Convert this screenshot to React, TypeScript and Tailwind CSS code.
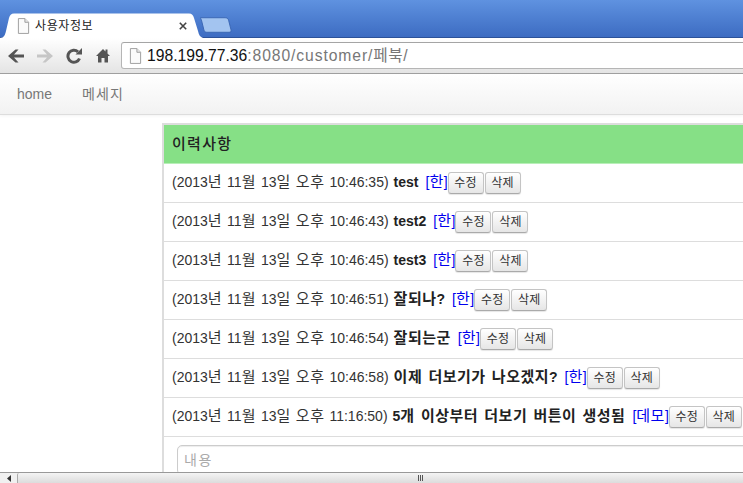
import React from "react";

const FONT = "font-['Liberation_Sans','Noto_Sans_CJK_KR',sans-serif]";

type Item = { time: string; title: string; tag: string };

const items: Item[] = [
  { time: "10:46:35", title: "test", tag: "한" },
  { time: "10:46:43", title: "test2", tag: "한" },
  { time: "10:46:45", title: "test3", tag: "한" },
  { time: "10:46:51", title: "잘되나?", tag: "한" },
  { time: "10:46:54", title: "잘되는군", tag: "한" },
  { time: "10:46:58", title: "이제 더보기가 나오겠지?", tag: "한" },
  { time: "11:16:50", title: "5개 이상부터 더보기 버튼이 생성됨", tag: "데모" },
];

// hangul runs are a bit narrower here than in the original font
const Ko = ({ text }: { text: string }) => (
  <>
    {text.split(/([가-힣]+)/).map((part, i) =>
      /[가-힣]/.test(part) ? (
        <span key={i} className="text-[15px] tracking-[0.5px]">
          {part}
        </span>
      ) : (
        part
      )
    )}
  </>
);

const PageIcon = ({ className }: { className: string }) => (
  <svg viewBox="0 0 14 17" className={className} fill="none">
    <path d="M1.5 .5h7l4 4v12h-11z" fill="#fbfbfb" stroke="#9a9a9a" />
    <path d="M8.5 .5v4h4" fill="#e8e8e8" stroke="#9a9a9a" />
  </svg>
);

const SmallButton = ({ label }: { label: string }) => (
  <button className="h-[22px] w-[36px] shrink-0 rounded-[3px] border border-[#c4c4c4] border-b-[#aaa] bg-gradient-to-b from-white to-[#e6e6e6] text-[12px] tracking-[0.2px] text-[#333] shadow-[0_1px_1px_rgba(0,0,0,0.1)]">
    {label}
  </button>
);

const HistoryRow = ({ item }: { item: Item }) => (
  <div className="flex h-[39px] items-center whitespace-nowrap border-b border-[#ddd] pb-px pl-2 text-[14px] text-[#333]">
    <span className="[word-spacing:1.1px]">
      <Ko text={`(2013년 11월 13일 오후 ${item.time})`} />
    </span>
    <b className="ml-[5px] text-[#222] [word-spacing:2.3px]">
      <Ko text={item.title} />
    </b>
    <a className="ml-[7px] text-[#0000ee]">
      [<Ko text={item.tag} />]
    </a>
    <div className="flex gap-px">
      <SmallButton label="수정" />
      <SmallButton label="삭제" />
    </div>
  </div>
);

export default function App() {
  return (
    <div className={`flex h-[483px] w-[743px] flex-col overflow-hidden bg-white ${FONT}`}>
      {/* tab strip */}
      <div className="flex h-[38px] shrink-0 items-end border-b border-[#2c5299] bg-gradient-to-b from-[#5f92e0] to-[#3d6cc2]">
        <div className="relative -mb-px flex h-[25px] w-[203px] shrink-0 items-center pl-[17px] text-[12px] tracking-[0.6px] text-[#222]">
          <svg viewBox="0 0 203 25" className="absolute inset-0 h-full w-full">
            <path d="M0 25C4 25 5 22 6 18L9 5C10 2 11 .5 14 .5H189C192 .5 193 2 194 5L198 18C199 22 200 24 203 25Z" fill="#fff" />
          </svg>
          <PageIcon className="relative h-[16px] w-[13px]" />
          <span className="relative ml-[5px] w-[144px]">사용자정보</span>
          <svg viewBox="0 0 10 10" className="relative h-[8px] w-[8px] shrink-0">
            <path d="M1 1l8 8M9 1l-8 8" stroke="#444" strokeWidth="2" />
          </svg>
        </div>
        <svg viewBox="0 0 33 16" className="-ml-[3px] mb-[4px] h-[16px] w-[32px] shrink-0">
          <path d="M.5 .5H26C28 .5 29 1.500 29.500 3L32 13C32.500 15 31.500 15.500 30 15.500H7C5 15.500 4.500 14.500 4 13L1.500 3C1 1.500 0 .5 .5 .5Z" fill="#a3c4f0" stroke="#3b66b4" />
        </svg>
      </div>

      {/* toolbar */}
      <div className="flex h-[36px] shrink-0 items-center border-b border-[#9f9f9f] bg-gradient-to-b from-white to-[#e4e4e4] pl-2">
        <svg viewBox="0 0 16 14" className="h-[14px] w-[16px] shrink-0">
          <path d="M7.500 .5L0 7l7.500 6.500h3L6 8.500h10v-3H6L10.500 .5z" fill="#555" />
        </svg>
        <svg viewBox="0 0 16 14" className="ml-[13px] h-[14px] w-[16px] shrink-0">
          <path d="M8.500 .5L16 7l-7.500 6.500h-3L10 8.500H0v-3h10L5.500 .5z" fill="#c6c6c6" />
        </svg>
        <svg viewBox="0 0 16 16" className="ml-[13px] h-[16px] w-[16px] shrink-0">
          <path d="M13.500 10.500A6 6 0 1 1 12 3.800" fill="none" stroke="#555" strokeWidth="3" />
          <path d="M9.500 6.500H16V0z" fill="#555" />
        </svg>
        <svg viewBox="0 0 14 14" className="ml-[14px] h-[15px] w-[14px] shrink-0">
          <path d="M7 .5L0 7.500h2V14h3.500V9.500h3V14H12V7.500h2L11.500 5V1h-2v2z" fill="#555" />
        </svg>
        <div className="ml-[11px] flex h-[27px] w-[640px] shrink-0 items-center rounded-l-[3px] border border-[#b5b5b5] border-t-[#a5a5a5] bg-white pl-[7px] text-[15.7px] text-[#777]">
          <PageIcon className="h-[16px] w-[13px] shrink-0" />
          <span className="ml-[5px] whitespace-nowrap">
            <span className="text-[#111]">198.199.77.36</span>
            <span className="tracking-[0.9px]">:8080/customer/</span>
            <span className="tracking-[0.5px]">페북/</span>
          </span>
        </div>
      </div>

      {/* page */}
      <div className="min-h-0 flex-1 overflow-hidden">
        <nav className="flex h-[41px] items-center gap-[30px] border-b border-[#ddd] bg-gradient-to-b from-white to-[#f2f2f2] pl-[17px] text-[14px] text-[#777] shadow-[0_1px_3px_rgba(0,0,0,0.05)]">
          <span>home</span>
          <span className="tracking-[1.1px]">메세지</span>
        </nav>

        <section className="ml-[162px] mt-[8px] w-[640px] border-2 border-b-0 border-[#ddd]">
          <h2 className="flex h-[39px] items-center border-b border-[#b8efb8] bg-[#86e086] pl-2 text-[15px] font-medium tracking-[1.3px] text-[#222]">
            이력사항
          </h2>
          {items.map((item) => (
            <HistoryRow key={item.time} item={item} />
          ))}
          <div className="px-[13px] pt-2">
            <input
              placeholder="내용"
              className="h-[30px] w-full rounded-[5px] border border-[#ccc] px-[6px] text-[14px] tracking-[1.5px] shadow-[inset_0_1px_1px_rgba(0,0,0,0.075)] placeholder:text-[#aaa]"
            />
          </div>
        </section>
      </div>

      {/* horizontal scrollbar */}
      <div className="flex h-[11px] shrink-0 items-stretch border-t border-[#999] bg-[#f0f0f0]">
        <div className="flex w-[17px] shrink-0 items-center justify-center">
          <svg viewBox="0 0 4 7" className="h-[7px] w-[4px]">
            <path d="M4 0v7L0 3.500z" fill="#333" />
          </svg>
        </div>
        <div className="flex flex-1 items-center justify-center rounded-tl-[2px] border-l border-[#aaa] bg-gradient-to-b from-[#f4f4f4] to-[#dcdcdc] pr-[1px]">
          <div className="flex gap-px pl-[80px]">
            <div className="h-[6px] w-px bg-[#555]" />
            <div className="h-[6px] w-px bg-[#555]" />
            <div className="h-[6px] w-px bg-[#555]" />
          </div>
        </div>
      </div>
    </div>
  );
}
